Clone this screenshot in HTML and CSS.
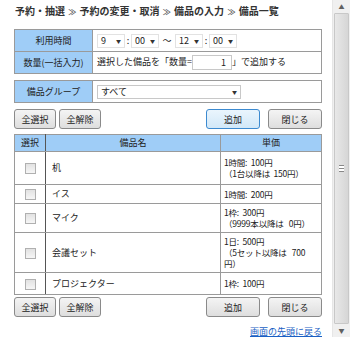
FILE: index.html
```html
<!DOCTYPE html>
<html lang="ja">
<head>
    <meta charset="UTF-8">
    <title>備品一覧</title>
    <link rel="stylesheet" href="styles.css">
</head>
<body>
    <div class="page">
        <div class="breadcrumb">予約・抽選 <span class="sep">≫</span> 予約の変更・取消 <span class="sep">≫</span> 備品の入力 <span class="sep">≫</span> 備品一覧</div>

        <table class="form-table">
            <tr>
                <th>利用時間</th>
                <td>
                    <div class="time-row">
                        <span class="select s-short">9</span>
                        <span class="colon">:</span>
                        <span class="select s-short">00</span>
                        <span class="tilde">～</span>
                        <span class="select s-short">12</span>
                        <span class="colon">:</span>
                        <span class="select s-short">00</span>
                    </div>
                </td>
            </tr>
            <tr>
                <th>数量(一括入力)</th>
                <td>選択した備品を「数量=<span class="qty">1</span>」で追加する</td>
            </tr>
        </table>

        <table class="form-table group-table">
            <tr>
                <th>備品グループ</th>
                <td><span class="select s-long">すべて</span></td>
            </tr>
        </table>

        <div class="btn-row">
            <div class="btn-left">
                <button class="btn">全選択</button>
                <button class="btn">全解除</button>
            </div>
            <div class="btn-right">
                <button class="btn btn-wide btn-focus">追加</button>
                <button class="btn btn-wide">閉じる</button>
            </div>
        </div>

        <table class="list-table">
            <tr>
                <th class="col-check">選択</th>
                <th>備品名</th>
                <th class="col-price">単価</th>
            </tr>
            <tr>
                <td class="col-check"><span class="check"></span></td>
                <td>机</td>
                <td class="price tall">1時間:&nbsp;&nbsp;100円<br>（1台以降は&nbsp;&nbsp;150円）</td>
            </tr>
            <tr>
                <td class="col-check"><span class="check"></span></td>
                <td>イス</td>
                <td class="price">1時間:&nbsp;&nbsp;200円</td>
            </tr>
            <tr>
                <td class="col-check"><span class="check"></span></td>
                <td>マイク</td>
                <td class="price">1枠:&nbsp;&nbsp;300円<br>（9999本以降は&nbsp;&nbsp;&nbsp;0円）</td>
            </tr>
            <tr>
                <td class="col-check"><span class="check"></span></td>
                <td>会議セット</td>
                <td class="price">1日:&nbsp;&nbsp;500円<br>（5セット以降は&nbsp;&nbsp;&nbsp;700<br>円）</td>
            </tr>
            <tr>
                <td class="col-check"><span class="check"></span></td>
                <td>プロジェクター</td>
                <td class="price roomy">1枠:&nbsp;&nbsp;100円</td>
            </tr>
        </table>

        <div class="btn-row bottom-row">
            <div class="btn-left">
                <button class="btn">全選択</button>
                <button class="btn">全解除</button>
            </div>
            <div class="btn-right">
                <button class="btn btn-wide">追加</button>
                <button class="btn btn-wide">閉じる</button>
            </div>
        </div>

        <div class="top-link"><a href="#">画面の先頭に戻る</a></div>
    </div>

    <div class="scrollbar">
        <div class="arrow">▲</div>
        <div class="track"><div class="thumb"><span class="grip"></span></div></div>
        <div class="arrow">▼</div>
    </div>
</body>
</html>
```

FILE: styles.css
```css
html, body {
    margin: 0;
    height: 337px;
    overflow: hidden;
}
body {
    display: flex;
    background: #fff;
    font-family: "Noto Sans CJK JP", "Noto Sans", sans-serif;
    font-size: 9px;
    line-height: 12px;
    color: #222;
}
.page {
    flex: 1;
    min-width: 0;
    padding: 3px 10px 0 14px;
}
.breadcrumb {
    font-size: 10px;
    font-weight: bold;
    color: #333;
    height: 16px;
    line-height: 16px;
    padding-left: 1px;
    margin-bottom: 10px;
    white-space: nowrap;
}
.breadcrumb .sep {
    font-size: 8px;
    color: #555;
    margin: 0 1px;
}
table {
    border-collapse: collapse;
    width: 100%;
    table-layout: fixed;
}
.form-table th,
.form-table td {
    border: 1px solid #9a9a9a;
    height: 21px;
    padding: 0 4px;
    font-weight: normal;
    white-space: nowrap;
}
.form-table th {
    width: 77px;
    padding: 0;
    background: #9fcdf7;
    text-align: center;
}
.group-table {
    margin-top: 6px;
}
.time-row {
    display: flex;
    align-items: center;
}
.select {
    display: inline-flex;
    align-items: center;
    justify-content: space-between;
    box-sizing: border-box;
    height: 14px;
    border: 1px solid #e2e2e2;
    padding: 0 3px;
    vertical-align: middle;
    background: #fff;
}
.select::after {
    content: "▼";
    font-size: 5px;
    color: #333;
}
.s-short {
    width: 28px;
}
.s-long {
    width: 144px;
    border-color: #c8c8c8;
}
.colon {
    width: 6px;
    text-align: center;
}
.tilde {
    width: 16px;
    text-align: center;
}
.qty {
    display: inline-block;
    box-sizing: border-box;
    width: 40px;
    height: 15px;
    border: 1px solid #c8c8c8;
    text-align: right;
    padding-right: 5px;
    vertical-align: middle;
    line-height: 13px;
}
.btn-row {
    display: flex;
    justify-content: space-between;
    margin: 6px 0 5px;
}
.btn-left,
.btn-right {
    display: flex;
    gap: 3px;
}
.btn-right {
    gap: 8px;
}
.btn {
    font-family: inherit;
    font-size: 9px;
    width: 42px;
    height: 20px;
    padding: 0;
    border: 1px solid #8a8a8a;
    border-radius: 3px;
    background: linear-gradient(#f4f4f4, #dedede);
    color: #222;
}
.btn-wide {
    width: 54px;
}
.btn-focus {
    border-color: #3c8ad0;
    background: linear-gradient(#eaf5fd, #d2e8f8);
}
.list-table th,
.list-table td {
    border: 1px solid #9a9a9a;
    padding: 3px 6px;
    text-align: left;
    font-weight: normal;
    white-space: nowrap;
}
.list-table th {
    background: #9fcdf7;
    text-align: center;
    padding: 2px 4px;
}
.list-table .col-check {
    width: 30px;
    padding: 0;
    text-align: center;
    border-right-color: #555;
}
.list-table .col-price {
    width: 92px;
}
.list-table .price {
    font-size: 8.5px;
    line-height: 11px;
    padding: 3px 3px;
    letter-spacing: -0.2px;
}
.list-table .price.tall {
    padding: 5px 3px;
}
.list-table .price.roomy {
    padding: 5px 3px;
}
.check {
    display: inline-block;
    width: 9px;
    height: 9px;
    border: 1px solid #b0b0b0;
    background: linear-gradient(#e2e2e2, #f6f6f6);
    vertical-align: middle;
}
.bottom-row {
    margin-top: 2px;
}
.top-link {
    text-align: right;
    margin-top: 9px;
}
.top-link a {
    color: #1a5fc4;
}
.scrollbar {
    width: 17px;
    display: flex;
    flex-direction: column;
    background: #f0f0f0;
    border-left: 1px solid #e6e6e6;
}
.arrow {
    height: 13px;
    font-size: 6px;
    color: #606060;
    text-align: center;
    line-height: 13px;
}
.track {
    flex: 1;
    padding: 0 1px;
}
.thumb {
    height: 100%;
    background: linear-gradient(to right, #e8e8e8, #d6d6d6);
    border: 1px solid #c8c8c8;
    border-radius: 1px;
    display: flex;
    align-items: center;
    justify-content: center;
    box-sizing: border-box;
}
.grip {
    width: 5px;
    height: 5px;
    border-top: 1px solid #888;
    border-bottom: 1px solid #888;
    background: linear-gradient(#fff 0 40%, #888 40% 60%, #fff 60%);
}
```
